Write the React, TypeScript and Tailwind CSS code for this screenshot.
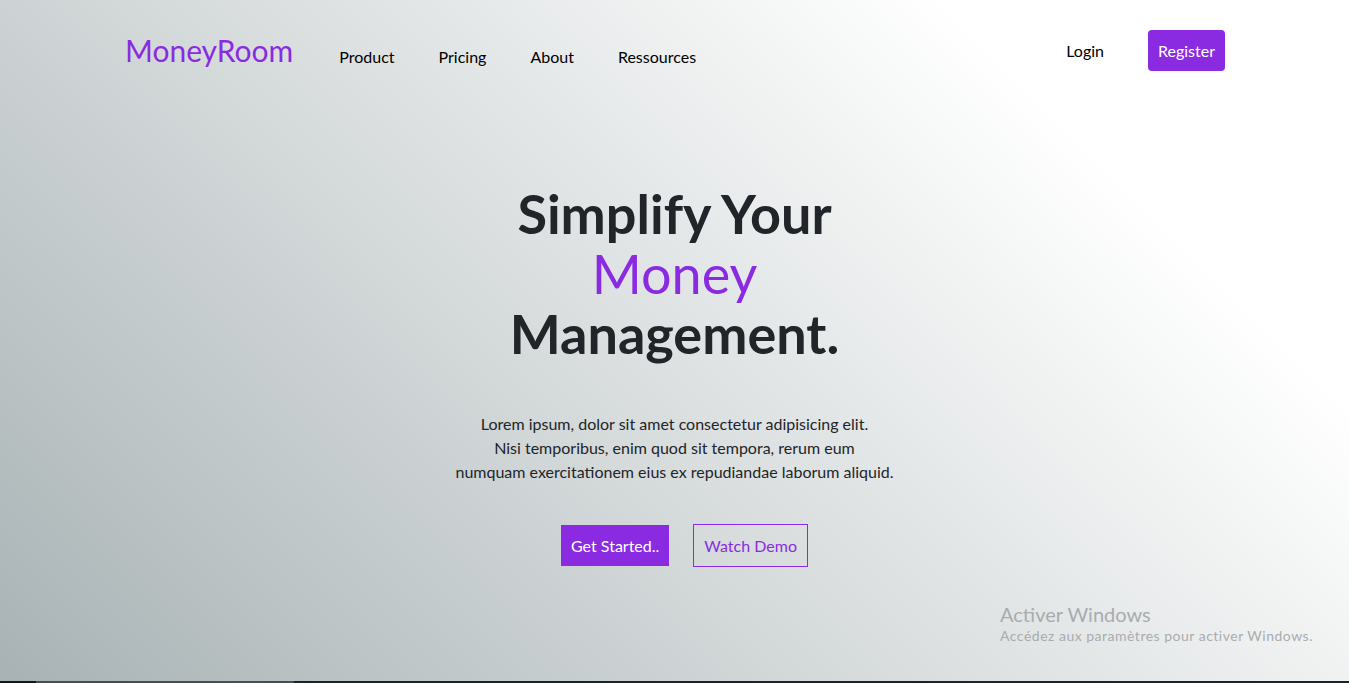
import React from "react";

export default function App() {
  return (
    <div
      className="relative flex h-[683px] w-full flex-col overflow-hidden bg-[linear-gradient(45deg,#a8b2b4_0%,#ffffff_80%)] text-[#212529]"
      style={{ fontFamily: "Lato, 'Open Sans', sans-serif" }}
    >
      <header className="flex items-center pl-[125px] pr-[124px] pt-[30px]">
        <div className="text-[30px] leading-[41px] text-[#8a2be2]">MoneyRoom</div>
        <nav className="ml-[46px] mt-[12px] flex gap-[44px] text-[16px] text-black">
          <a>Product</a>
          <a>Pricing</a>
          <a>About</a>
          <a>Ressources</a>
        </nav>
        <div className="ml-auto flex items-center gap-[44px]">
          <a className="text-[16px] text-black">Login</a>
          <button className="h-[41px] rounded-[4px] bg-[#8a2be2] px-[10px] text-[16px] text-white">
            Register
          </button>
        </div>
      </header>

      <main className="flex flex-col items-center pt-[113px] text-center">
        <h1 className="text-[54px] font-bold leading-[60px]">
          Simplify Your
          <br />
          <span className="font-normal text-[#8a2be2]">Money</span>
          <br />
          Management.
        </h1>
        <p className="mt-[48px] text-[16px] leading-[24px] text-[#212529]">
          Lorem ipsum, dolor sit amet consectetur adipisicing elit.
          <br />
          Nisi temporibus, enim quod sit tempora, rerum eum
          <br />
          numquam exercitationem eius ex repudiandae laborum aliquid.
        </p>
        <div className="mt-[40px] flex items-center gap-[24px] pl-[20px]">
          <button className="h-[41px] bg-[#8a2be2] px-[10px] text-[16px] text-white">Get Started..</button>
          <button className="h-[43px] border border-[#8a2be2] px-[10px] text-[16px] text-[#8a2be2]">
            Watch Demo
          </button>
        </div>
      </main>

      <div className="absolute left-[1000px] top-[601px] text-[#a9acae]">
        <div className="text-[20px] leading-[26px]">Activer Windows</div>
        <div className="text-[14px] leading-[18px] tracking-[0.5px]">Accédez aux paramètres pour activer Windows.</div>
      </div>

      <div className="absolute bottom-0 left-0 flex h-[2px] w-full">
        <div className="w-[36px] bg-[#11181c]" />
        <div className="w-[258px] bg-[#464e53]" />
        <div className="flex-1 bg-[#1c2327]" />
      </div>
    </div>
  );
}
